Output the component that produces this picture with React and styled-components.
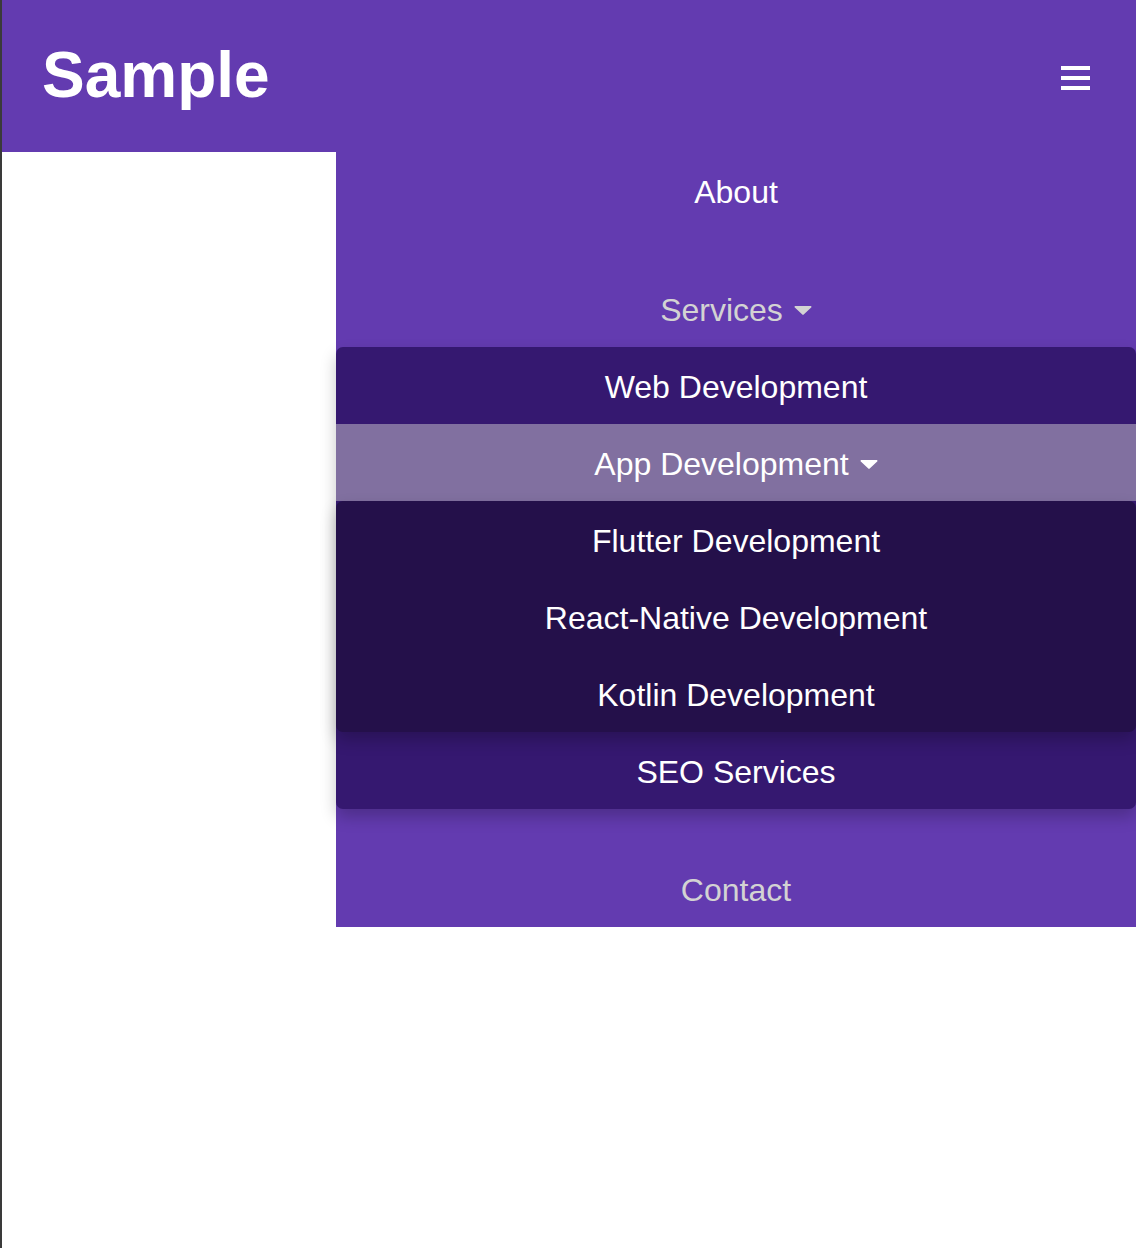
import styled, { createGlobalStyle } from "styled-components";

const Global = createGlobalStyle`
  html, body {
    margin: 0;
    padding: 0;
    background: #fff;
  }
  * {
    box-sizing: border-box;
  }
`;

const Page = styled.div`
  min-height: 100vh;
  border-left: 2px solid #3a3a3a;
  font-family: "Liberation Sans", Arial, Helvetica, sans-serif;
`;

const Header = styled.header`
  height: 152px;
  background-color: #633bb0;
  display: flex;
  align-items: center;
  justify-content: space-between;
  padding: 0 46px 0 40px;
`;

const Logo = styled.h1`
  margin: 0;
  color: #fff;
  font-size: 64px;
  font-weight: 700;
  line-height: 1.12;
`;

const Burger = styled.button`
  border: 0;
  background: none;
  padding: 0;
  margin-top: 4px;
  width: 29px;
  display: flex;
  flex-direction: column;
  gap: 5.5px;
  cursor: pointer;

  span {
    display: block;
    height: 4.5px;
    background: #fff;
  }
`;

const Row = styled.div`
  display: flex;
  justify-content: flex-end;
`;

const Panel = styled.nav`
  width: 800px;
  background-color: #633bb0;
`;

const Menu = styled.ul`
  list-style: none;
  margin: 0;
  padding: 0;
  display: flex;
  flex-direction: column;
  gap: 41px;
`;

const NavLink = styled.a`
  display: flex;
  align-items: center;
  justify-content: center;
  gap: 11px;
  height: 77px;
  padding-top: 3px;
  font-size: 32px;
  color: ${props => (props.$muted ? "#d3d3d3" : "#fff")};
  background: ${props => (props.$active ? "#8170a0" : "transparent")};
  text-decoration: none;
`;

const Dropdown = styled.ul`
  list-style: none;
  margin: 0;
  padding: 0;
  background-color: ${props => (props.$deep ? "#24104a" : "#351870")};
  border-radius: 7px;
  box-shadow: 0 8px 16px rgba(0, 0, 0, 0.22);
  position: relative;
`;

const Caret = () => (
  <svg width="18" height="10" viewBox="0 0 18 10" aria-hidden="true">
    <path d="M1.5 1h15c.9 0 1.3 1 .7 1.6l-7.5 7a1 1 0 0 1-1.4 0l-7.5-7C.2 2 .6 1 1.5 1z" fill="currentColor" />
  </svg>
);

function App() {
  return (
    <>
      <Global />
      <Page>
        <Header>
          <Logo>Sample</Logo>
          <Burger aria-label="menu">
            <span />
            <span />
            <span />
          </Burger>
        </Header>
        <Row>
          <Panel>
            <Menu>
              <li>
                <NavLink href="#">About</NavLink>
              </li>
              <li>
                <NavLink href="#" $muted>
                  Services <Caret />
                </NavLink>
                <Dropdown>
                  <li>
                    <NavLink href="#">Web Development</NavLink>
                  </li>
                  <li>
                    <NavLink href="#" $active>
                      App Development <Caret />
                    </NavLink>
                    <Dropdown $deep>
                      <li>
                        <NavLink href="#">Flutter Development</NavLink>
                      </li>
                      <li>
                        <NavLink href="#">React-Native Development</NavLink>
                      </li>
                      <li>
                        <NavLink href="#">Kotlin Development</NavLink>
                      </li>
                    </Dropdown>
                  </li>
                  <li>
                    <NavLink href="#">SEO Services</NavLink>
                  </li>
                </Dropdown>
              </li>
              <li>
                <NavLink href="#" $muted>Contact</NavLink>
              </li>
            </Menu>
          </Panel>
        </Row>
      </Page>
    </>
  );
}

export default App;
